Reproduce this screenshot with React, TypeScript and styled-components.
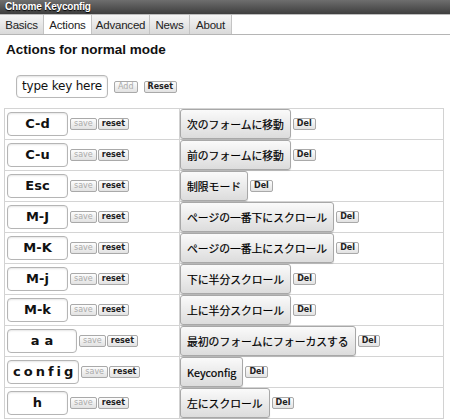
import React, { FC } from "react";
import styled, { createGlobalStyle } from "styled-components";

//Global
const GlobalStyle = createGlobalStyle`
  body {
    margin: 0;
    background: #fff;
    font-family: "Liberation Sans", "Noto Sans CJK JP", sans-serif;
    color: #111;
  }
`;

//Styles
const TitleBar = styled.div`
  height: 14px;
  background: linear-gradient(#6e6e6e, #3e3e3e);
  color: #fff;
  font-weight: bold;
  font-size: 10px;
  line-height: 14px;
  padding-left: 5px;
  letter-spacing: -0.2px;
  text-shadow: 0 1px 1px #000;
`;

const TabStrip = styled.div`
  display: flex;
  height: 19px;
  border-top: 1px solid #bdbdbd;
  border-bottom: 1px solid #b5b5b5;
  background: #fff;
`;

const Tab = styled.div<{ active?: boolean; width: number }>`
  display: flex;
  align-items: center;
  justify-content: center;
  width: ${(p) => p.width}px;
  box-sizing: border-box;
  font-size: 11.5px;
  letter-spacing: -0.2px;
  color: #222;
  border-right: 1px solid #c4c4c4;
  background: ${(p) => (p.active ? "#fff" : "linear-gradient(#f6f6f6, #d9d9d9)")};
`;

const Heading = styled.h1`
  margin: 0;
  padding: 6px 0 0 6px;
  height: 22px;
  font-size: 13.5px;
  font-weight: bold;
  line-height: 18px;
  color: #111;
`;

const AddRow = styled.div`
  display: flex;
  align-items: center;
  gap: 6px;
  padding: 12px 0 0 16px;
  height: 23px;
`;

const NewKeyInput = styled.div`
  width: 90px;
  height: 21px;
  border: 1px solid #b8b8b8;
  border-radius: 4px;
  box-shadow: inset 0 1px 2px rgba(0, 0, 0, 0.12);
  font-family: "DejaVu Sans", sans-serif;
  font-size: 12px;
  letter-spacing: -0.2px;
  line-height: 21px;
  text-align: center;
  color: #111;
`;

const SmallButton = styled.button<{ disabled?: boolean }>`
  height: 12px;
  padding: 0 3px;
  margin: 0;
  font-family: "DejaVu Sans", sans-serif;
  font-size: 8px;
  font-weight: ${(p) => (p.disabled ? "normal" : "bold")};
  line-height: 10px;
  color: ${(p) => (p.disabled ? "#aaa" : "#222")};
  background: linear-gradient(#fdfdfd, #e2e2e2);
  border: 1px solid #a9a9a9;
  border-radius: 2px;
`;

const Table = styled.table`
  margin: 10px 0 0 4px;
  width: 440px;
  border-collapse: collapse;
  border: 1px solid #d2d2d2;
`;

const Row = styled.tr`
  height: 31px;
  border-top: 1px solid #d4d4d4;
`;

const KeyCell = styled.td`
  width: 172px;
  padding: 0 0 0 2px;
  border-right: 1px solid #d4d4d4;
  vertical-align: middle;
`;

const KeyWrap = styled.div`
  display: flex;
  align-items: center;
  gap: 1px;
`;

const KeyBox = styled.div<{ spacing: number }>`
  min-width: 59px;
  height: 22px;
  padding: 0 ${(p) => (p.spacing ? 2 : 0)}px 0 ${(p) => (p.spacing ? 2 + p.spacing : 0)}px;
  margin-right: 1px;
  border: 1px solid #b5b5b5;
  border-radius: 4px;
  box-shadow: inset 0 1px 2px rgba(0, 0, 0, 0.1);
  font-family: "DejaVu Sans", sans-serif;
  font-size: 13px;
  font-weight: bold;
  line-height: 22px;
  letter-spacing: ${(p) => p.spacing}px;
  text-align: center;
  color: #111;
`;

const ActionCell = styled.td`
  padding: 0;
  vertical-align: top;
`;

const ActionWrap = styled.div`
  display: flex;
  align-items: center;
  gap: 2px;
`;

const ActionButton = styled.button`
  height: 30px;
  padding: 0 6px;
  margin: 0;
  font-family: "Noto Sans CJK JP", sans-serif;
  font-size: 10.8px;
  font-weight: normal;
  color: #000;
  background: linear-gradient(#fafafa, #dcdcdc);
  border: 1px solid #a8a8a8;
  border-radius: 3px;
  box-shadow: 0 1px 1px rgba(0, 0, 0, 0.15);
  white-space: nowrap;
  -webkit-text-stroke: 0.2px #000;
`;

interface Binding {
  keyName: string;
  action: string;
  spacing?: number;
}

const bindings: Binding[] = [
  { keyName: "C-d", action: "次のフォームに移動" },
  { keyName: "C-u", action: "前のフォームに移動" },
  { keyName: "Esc", action: "制限モード" },
  { keyName: "M-J", action: "ページの一番下にスクロール" },
  { keyName: "M-K", action: "ページの一番上にスクロール" },
  { keyName: "M-j", action: "下に半分スクロール" },
  { keyName: "M-k", action: "上に半分スクロール" },
  { keyName: "aa", action: "最初のフォームにフォーカスする", spacing: 5 },
  { keyName: "config", action: "Keyconfig", spacing: 3 },
  { keyName: "h", action: "左にスクロール" },
];

const tabs = [
  { label: "Basics", width: 44 },
  { label: "Actions", width: 48, active: true },
  { label: "Advanced", width: 58 },
  { label: "News", width: 40 },
  { label: "About", width: 42 },
];

const App: FC = () => {
  return (
    <>
      <GlobalStyle />
      <TitleBar>Chrome Keyconfig</TitleBar>
      <TabStrip>
        {tabs.map((t) => (
          <Tab key={t.label} active={t.active} width={t.width}>
            {t.label}
          </Tab>
        ))}
      </TabStrip>
      <Heading>Actions for normal mode</Heading>
      <AddRow>
        <NewKeyInput>type key here</NewKeyInput>
        <SmallButton disabled>Add</SmallButton>
        <SmallButton>Reset</SmallButton>
      </AddRow>
      <Table>
        <tbody>
          {bindings.map((b) => (
            <Row key={b.keyName}>
              <KeyCell>
                <KeyWrap>
                  <KeyBox spacing={b.spacing || 0}>{b.keyName}</KeyBox>
                  <SmallButton disabled>save</SmallButton>
                  <SmallButton>reset</SmallButton>
                </KeyWrap>
              </KeyCell>
              <ActionCell>
                <ActionWrap>
                  <ActionButton>{b.action}</ActionButton>
                  <SmallButton>Del</SmallButton>
                </ActionWrap>
              </ActionCell>
            </Row>
          ))}
        </tbody>
      </Table>
    </>
  );
};

export default App;
